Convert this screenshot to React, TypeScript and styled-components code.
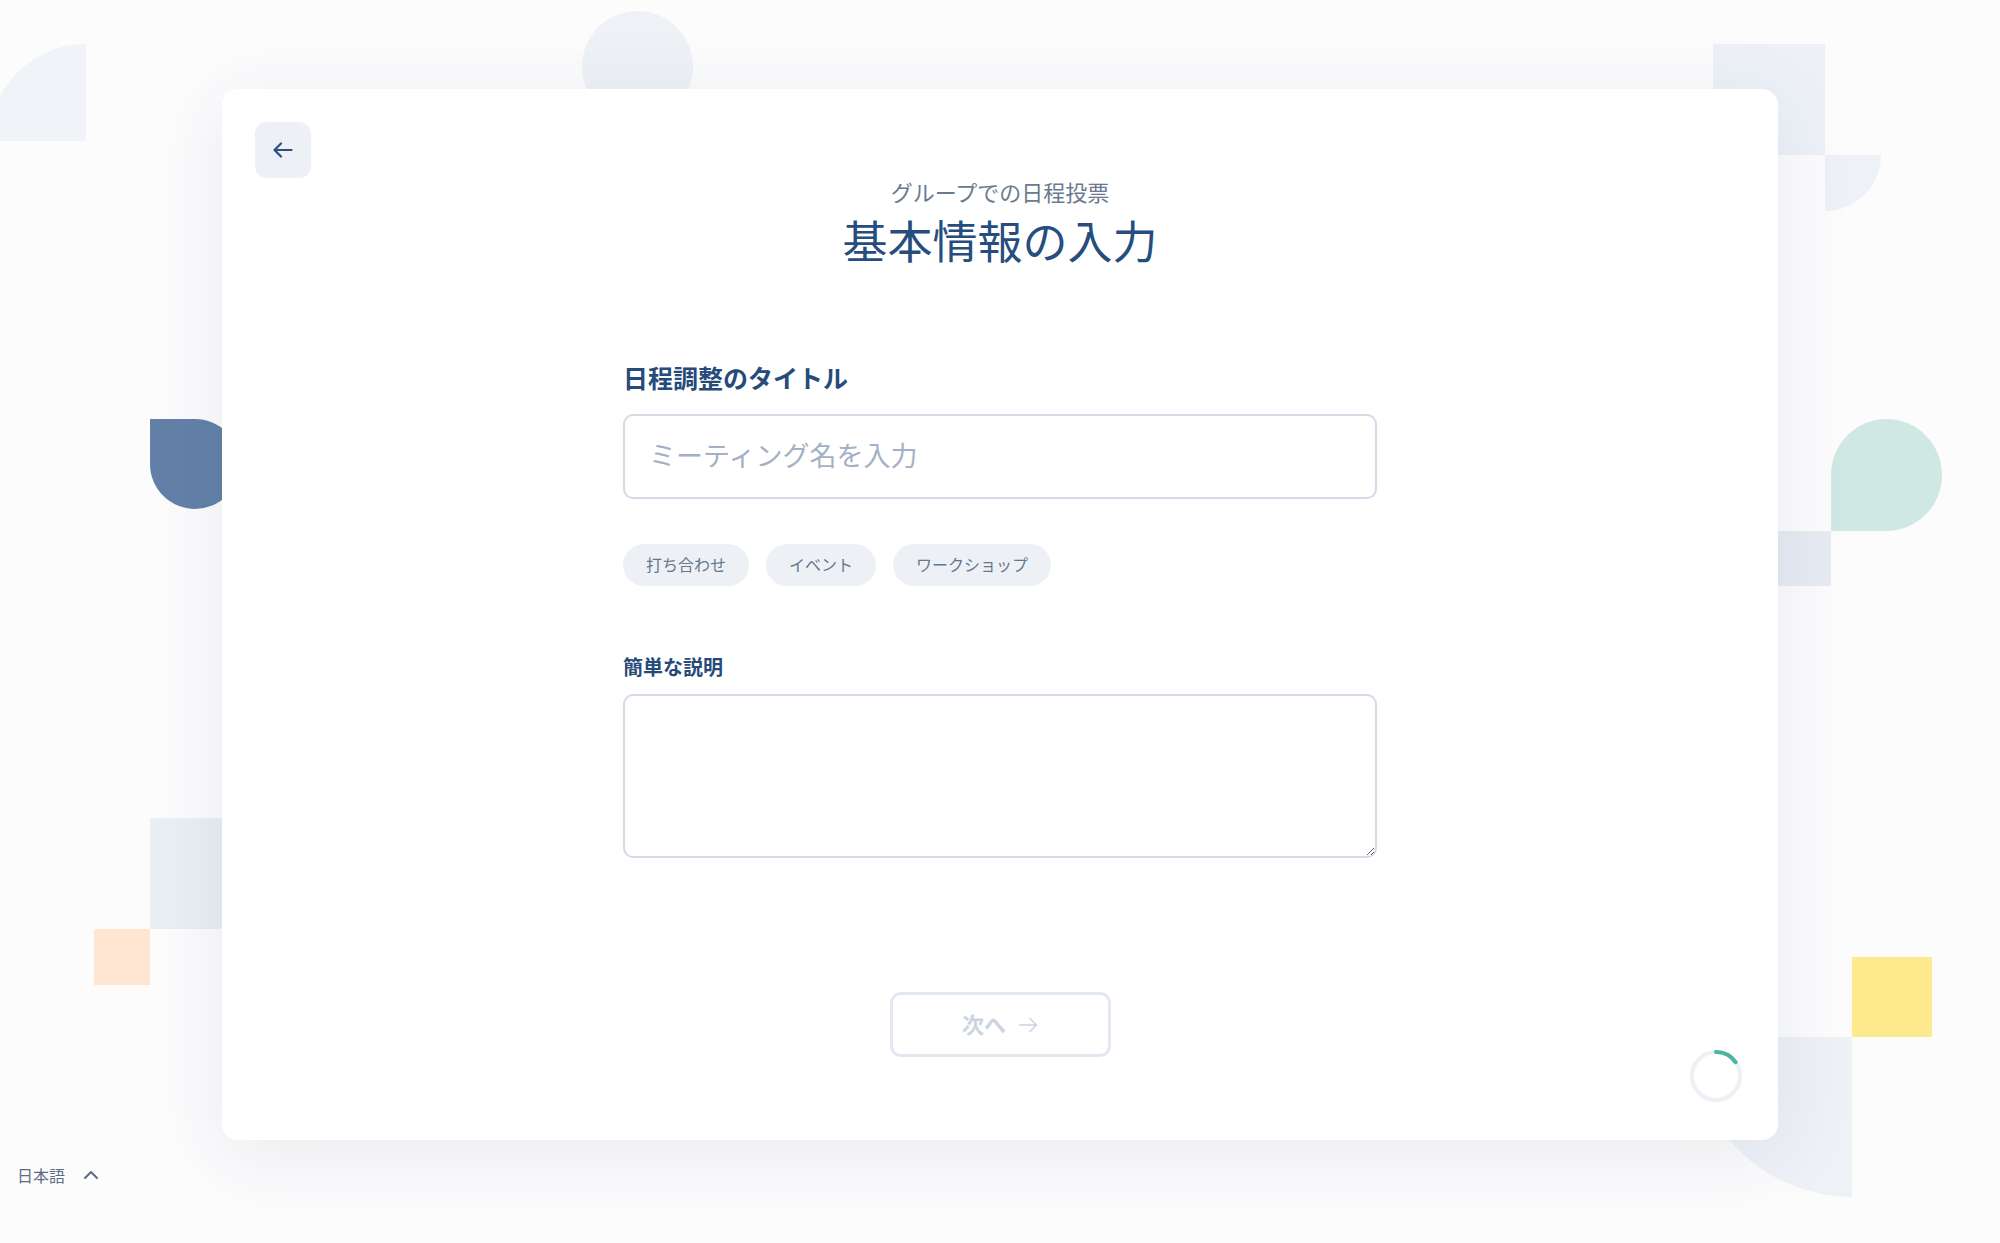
import styled, { createGlobalStyle } from 'styled-components';
import { ChevronUp } from 'lucide-react';

const GlobalStyle = createGlobalStyle`
  html, body {
    margin: 0;
    padding: 0;
    background: #fcfcfd;
    font-family: "Noto Sans CJK JP", "Noto Sans", sans-serif;
  }
  * { box-sizing: border-box; }
`;

const PRESETS = ["打ち合わせ", "イベント", "ワークショップ"];

// background shapes, placed on a free canvas behind the card
const SHAPES = [
  { left: -11, top: 44, w: 97, h: 97, bg: "#f0f3f8", radius: "97px 0 0 0" },
  { left: 582, top: 11, w: 111, h: 111, bg: "#eef2f7", radius: "50%" },
  { left: 1713, top: 44, w: 112, h: 111, bg: "#edf1f7", radius: "0" },
  { left: 1825, top: 155, w: 56, h: 56, bg: "#eef2f8", radius: "0 0 56px 0" },
  { left: 1831, top: 419, w: 111, h: 112, bg: "#cfe8e4", radius: "50% 50% 50% 0" },
  { left: 1775, top: 531, w: 56, h: 55, bg: "#e7ecf3", radius: "0" },
  { left: 1852, top: 957, w: 80, h: 80, bg: "#fee98d", radius: "0" },
  { left: 1692, top: 1037, w: 160, h: 160, bg: "#eef2f7", radius: "0 0 0 160px" },
  { left: 150, top: 419, w: 90, h: 90, bg: "#6381a8", radius: "0 50% 50% 50%" },
  { left: 150, top: 818, w: 111, h: 111, bg: "#eaeff5", radius: "0" },
  { left: 94, top: 929, w: 56, h: 56, bg: "#fee6d2", radius: "0" },
];

const Page = styled.div`
  position: relative;
  min-height: 100vh;
  padding-top: 89px;
  overflow: hidden;
  display: flex;
  flex-direction: column;
`;

const Decor = styled.div`
  position: absolute;
  inset: 0;
  z-index: 0;
  pointer-events: none;
`;

const Shape = styled.div<{ $bg: string; $radius: string }>`
  position: absolute;
  background: ${(p) => p.$bg};
  border-radius: ${(p) => p.$radius};
`;

const Card = styled.main`
  position: relative;
  z-index: 1;
  width: 1556px;
  height: 1051px;
  margin: 0 auto;
  padding: 33px;
  background: #ffffff;
  border-radius: 16px;
  box-shadow: 0 14px 80px rgba(40, 55, 85, 0.09);
  display: flex;
  flex-direction: column;
`;

const TopBar = styled.div`
  display: flex;
  align-items: center;
  height: 56px;
`;

const BackButton = styled.button`
  width: 56px;
  height: 56px;
  border: none;
  border-radius: 12px;
  background: #edf0f5;
  color: #2b5080;
  display: flex;
  align-items: center;
  justify-content: center;
  cursor: pointer;
`;

const Heading = styled.header`
  display: flex;
  flex-direction: column;
  align-items: center;
`;

const Subtitle = styled.p`
  margin: 0;
  font-size: 22px;
  line-height: 26px;
  color: #6b7a90;
`;

const Title = styled.h1`
  margin: 8px 0 0;
  font-size: 45px;
  line-height: 56px;
  font-weight: 400;
  color: #264d7e;
`;

const Form = styled.form`
  align-self: center;
  width: 754px;
  margin-top: 93px;
  display: flex;
  flex-direction: column;
`;

const Label = styled.label<{ $size: number }>`
  font-size: ${(p) => p.$size}px;
  line-height: ${(p) => p.$size + 8}px;
  font-weight: 700;
  color: #264b7a;
`;

const TextInput = styled.input`
  margin-top: 20px;
  height: 85px;
  padding: 0 24px 4px;
  border: 2px solid #d3dbe6;
  border-radius: 10px;
  font-family: inherit;
  font-size: 27px;
  color: #2b3a50;
  outline: none;

  &::placeholder {
    color: #a3b1c4;
  }
`;

const ChipRow = styled.div`
  display: flex;
  gap: 17px;
  margin-top: 45px;
  margin-bottom: 67px;
`;

const Chip = styled.button`
  height: 42px;
  padding: 0 23px 3px;
  border: none;
  border-radius: 21px;
  background: #edf1f6;
  color: #66768e;
  font-family: inherit;
  font-size: 16px;
  cursor: pointer;
`;

const TextArea = styled.textarea`
  margin-top: 13px;
  height: 164px;
  padding: 16px 24px;
  border: 2px solid #d3dbe6;
  border-radius: 10px;
  font-family: inherit;
  font-size: 20px;
  outline: none;
`;

const NextButton = styled.button`
  align-self: center;
  margin-top: 134px;
  width: 221px;
  height: 65px;
  padding: 0 0 4px;
  border: 3px solid #e2e8f0;
  border-radius: 11px;
  background: #ffffff;
  color: #cbd4e0;
  font-family: inherit;
  font-size: 22px;
  font-weight: 700;
  display: flex;
  align-items: center;
  justify-content: center;
  gap: 12px;
  cursor: not-allowed;

  svg {
    margin-top: 4px;
  }
`;

const Spinner = styled.svg`
  position: absolute;
  right: 34px;
  bottom: 36px;
`;

const Footer = styled.footer`
  position: relative;
  z-index: 1;
  margin-top: 23px;
  padding: 0 17px;
  display: flex;
  align-items: center;
  gap: 14px;
  font-size: 16px;
  line-height: 24px;
  color: #5c6b82;
`;

const Arrow = ({ dir, weight }: { dir: "left" | "right"; weight: number }) => (
  <svg width="20" height="16" viewBox="0 0 20 16" fill="none" stroke="currentColor"
    strokeWidth={weight} strokeLinecap="round" strokeLinejoin="round">
    {dir === "left"
      ? <path d="M18.5 8H1.5M8 1.5L1.5 8L8 14.5" />
      : <path d="M1.5 8H18.5M12 1.5L18.5 8L12 14.5" />}
  </svg>
);

const App = () => {
  return (
    <>
      <GlobalStyle />
      <Page>
        <Decor>
          {SHAPES.map((s, i) => (
            <Shape
              key={i}
              $bg={s.bg}
              $radius={s.radius}
              style={{ left: s.left, top: s.top, width: s.w, height: s.h }}
            />
          ))}
        </Decor>

        <Card>
          <TopBar>
            <BackButton type="button" aria-label="戻る">
              <Arrow dir="left" weight={2.2} />
            </BackButton>
          </TopBar>

          <Heading>
            <Subtitle>グループでの日程投票</Subtitle>
            <Title>基本情報の入力</Title>
          </Heading>

          <Form onSubmit={(e) => e.preventDefault()}>
            <Label $size={25} htmlFor="title">日程調整のタイトル</Label>
            <TextInput id="title" type="text" placeholder="ミーティング名を入力" />
            <ChipRow>
              {PRESETS.map((p) => (
                <Chip key={p} type="button">{p}</Chip>
              ))}
            </ChipRow>
            <Label $size={20} htmlFor="desc">簡単な説明</Label>
            <TextArea id="desc" />
            <NextButton type="submit" disabled>
              次へ
              <Arrow dir="right" weight={1.6} />
            </NextButton>
          </Form>

          <Spinner width="56" height="56" viewBox="0 0 56 56">
            <circle cx="28" cy="28" r="24" fill="none" stroke="#edf0f5" strokeWidth="4" />
            <path d="M28 4 A24 24 0 0 1 47.66 14.23" fill="none" stroke="#4bb3a0" strokeWidth="4" strokeLinecap="round" />
          </Spinner>
        </Card>

        <Footer>
          日本語
          <ChevronUp size={24} strokeWidth={2} />
        </Footer>
      </Page>
    </>
  );
};

export default App;
